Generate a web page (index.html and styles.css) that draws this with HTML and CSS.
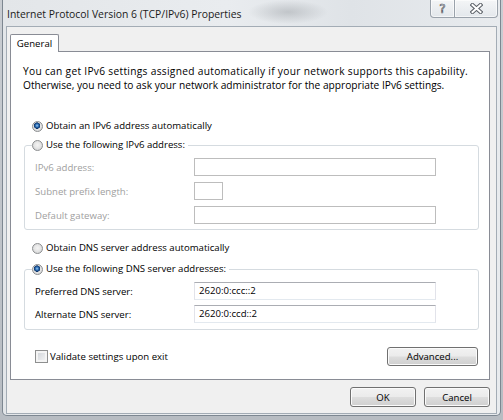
FILE: index.html
```html
<!DOCTYPE html>
<html>
<head>
<meta charset="utf-8">
<link rel="stylesheet" href="styles.css">
</head>
<body>
<div class="frame">
  <div class="titlebar">
    <span class="title">Internet Protocol Version 6 (TCP/IPv6) Properties</span>
    <div class="caption-buttons">
      <span class="cb help">?</span>
      <span class="cb close">
        <svg width="13" height="11" viewBox="0 0 13 11">
          <path d="M2.5 2 L10.5 9 M10.5 2 L2.5 9" stroke="#5a5f66" stroke-width="4" stroke-linecap="square" fill="none"/>
          <path d="M2.5 2 L10.5 9 M10.5 2 L2.5 9" stroke="#ffffff" stroke-width="2" stroke-linecap="square" fill="none"/>
        </svg>
      </span>
    </div>
  </div>
  <div class="client">
    <div class="tabs"><span class="tab">General</span></div>
    <div class="panel">
      <p class="intro"><span class="intro-line intro-line-1">You can get IPv6 settings assigned automatically if your network supports this capability.</span><span class="intro-line">Otherwise, you need to ask your network administrator for the appropriate IPv6 settings.</span></p>
      <div class="opt opt-first"><span class="radio checked"></span>Obtain an IPv6 address automatically</div>
      <fieldset class="group group-ip">
        <legend class="opt"><span class="radio"></span>Use the following IPv6 address:</legend>
        <div class="row disabled"><span class="lbl">IPv6 address:</span><span class="input wide"></span></div>
        <div class="row disabled"><span class="lbl">Subnet prefix length:</span><span class="input short"></span></div>
        <div class="row disabled"><span class="lbl">Default gateway:</span><span class="input wide"></span></div>
      </fieldset>
      <div class="opt opt-dns"><span class="radio"></span>Obtain DNS server address automatically</div>
      <fieldset class="group group-dns">
        <legend class="opt"><span class="radio checked"></span>Use the following DNS server addresses:</legend>
        <div class="row"><span class="lbl">Preferred DNS server:</span><span class="input wide enabled">2620:0:ccc::2</span></div>
        <div class="row row-tight"><span class="lbl">Alternate DNS server:</span><span class="input wide enabled">2620:0:ccd::2</span></div>
      </fieldset>
      <div class="check-row">
        <span class="check"><span class="checkbox"></span>Validate settings upon exit</span>
        <span class="btn btn-adv">Advanced...</span>
      </div>
    </div>
    <div class="dialog-buttons">
      <span class="btn btn-dlg">OK</span>
      <span class="btn btn-dlg">Cancel</span>
    </div>
  </div>
</div>
</body>
</html>
```
FILE: styles.css
```css
* { box-sizing: border-box; }
html, body {
  margin: 0;
  padding: 0;
}
body {
  width: 503px;
  height: 420px;
  overflow: hidden;
  background: linear-gradient(to bottom, #c9cdd2, #b7bcc2);
  font-family: "Open Sans", "Noto Sans", sans-serif;
  font-size: 9.6px;
  color: #000;
}
.frame {
  margin-left: 2px;
  width: 499px;
  height: 416px;
  border: 1px solid #7d8791;
  border-top: none;
  border-radius: 0 0 5px 5px;
  background:
    radial-gradient(ellipse 40px 12px at 285px 12px, rgba(150,155,160,0.45), rgba(150,155,160,0) 100%),
    linear-gradient(to right, #e3e6e9, #e9ecef 45%, #dfe3e7 70%, #e8ebee);
  display: flex;
  flex-direction: column;
}
.titlebar {
  height: 26px;
  display: flex;
  justify-content: space-between;
  align-items: flex-start;
  padding-left: 4px;
}
.title {
  font-size: 10.4px;
  line-height: 28px;
  color: #1a1a1a;
}
.caption-buttons {
  display: flex;
  margin-right: 2px;
}
.cb {
  height: 18px;
  display: flex;
  align-items: center;
  justify-content: center;
  border: 1px solid #9aa2ab;
  border-top: none;
  background: linear-gradient(to bottom, rgba(255,255,255,0.55), rgba(225,230,235,0.6));
  box-shadow: inset 0 0 0 1px rgba(255,255,255,0.6);
}
.help {
  width: 25px;
  border-radius: 0 0 0 4px;
  font-family: "DejaVu Sans", sans-serif;
  font-size: 12px;
  color: #fff;
  -webkit-text-stroke: 0.7px #5a5f66;
}
.close {
  width: 43px;
  border-left: none;
  border-radius: 0 0 4px 0;
}
.client {
  margin: 0 3px 0 3px;
  height: 388px;
  border: 1px solid #a3acb5;
  background: #f0f0f0;
  padding: 7px 6px 6px 3px;
  display: flex;
  flex-direction: column;
}
.tabs {
  display: flex;
  height: 18px;
  margin-bottom: -1px;
  position: relative;
  z-index: 1;
}
.tab {
  width: 49px;
  height: 18px;
  border: 1px solid #898c95;
  border-bottom: none;
  border-radius: 2px 2px 0 0;
  background: #fff;
  text-align: center;
  line-height: 17px;
}
.panel {
  width: 480px;
  height: 329px;
  border: 1px solid #898c95;
  background: #fff;
  padding: 0 10px 0 12px;
}
.intro {
  margin: 12px 0 0 0;
  font-size: 10.2px;
  line-height: 14px;
}
.intro-line {
  display: block;
  white-space: nowrap;
}
.intro-line-1 {
  letter-spacing: 0.3px;
}
.opt {
  display: flex;
  align-items: center;
  height: 14px;
  line-height: 14px;
}
.opt-first {
  margin: 27px 0 0 9px;
}
.opt-dns {
  margin: 11px 0 0 9px;
}
.radio {
  width: 11px;
  height: 11px;
  border-radius: 50%;
  border: 1px solid #8c8e90;
  background: radial-gradient(circle at 50% 45%, #f4f4f4 0, #e6e6e6 45%, #c9cbcd 100%);
  margin-right: 3px;
  flex: none;
}
.radio.checked {
  background:
    radial-gradient(circle at 45% 40%, #9cc9ef 0, #2a6db5 1.6px, #0f3366 3px, rgba(15,51,102,0) 3.4px),
    radial-gradient(circle at 50% 45%, #f4f4f4 0, #e6e6e6 45%, #c9cbcd 100%);
}
.group {
  margin: 0 0 0 1px;
  padding: 0 10px 5px 10px;
  border: 1px solid #d5dbe0;
  border-radius: 3px;
  min-width: 0;
}
.group-ip {
  margin-top: 5px;
}
.group-dns {
  margin-top: 7px;
  padding-bottom: 6px;
}
.group legend {
  padding: 0 3px 0 0;
  margin-left: -3px;
}
.row {
  display: flex;
  align-items: center;
  height: 18px;
  margin-top: 6px;
}
.row-tight {
  margin-top: 5px;
}
.lbl {
  width: 159px;
  flex: none;
}
.row.disabled .lbl {
  color: #a0a0a0;
}
.input {
  height: 18px;
  border: 1px solid #bdbdbd;
  background: #fff;
  padding-left: 4px;
  line-height: 16px;
}
.input.enabled {
  border-color: #e2e3ea #e2e3ea #e3e9ef #e2e3ea;
  border-top-color: #abadb3;
}
.wide { width: 242px; }
.short { width: 29px; }
.check-row {
  margin: 17px 1px 0 12px;
  display: flex;
  justify-content: space-between;
  align-items: center;
  height: 19px;
}
.check {
  display: flex;
  align-items: center;
}
.checkbox {
  width: 13px;
  height: 13px;
  border: 1px solid #8e8f8f;
  background: linear-gradient(135deg, #cdd1d6, #f7f7f7);
  box-shadow: inset 0 0 0 2px #f4f4f4;
  margin-right: 2px;
}
.btn {
  display: flex;
  align-items: center;
  justify-content: center;
  border: 1px solid #707070;
  border-radius: 3px;
  background: linear-gradient(to bottom, #f2f2f2 0%, #ebebeb 48%, #dddddd 52%, #cfcfcf 100%);
  box-shadow: inset 0 0 0 1px #fbfbfb;
  color: #000;
}
.btn-adv {
  width: 91px;
  height: 19px;
}
.dialog-buttons {
  display: flex;
  justify-content: flex-end;
  gap: 8px;
  margin-top: 7px;
}
.btn-dlg {
  width: 66px;
  height: 20px;
}
```
